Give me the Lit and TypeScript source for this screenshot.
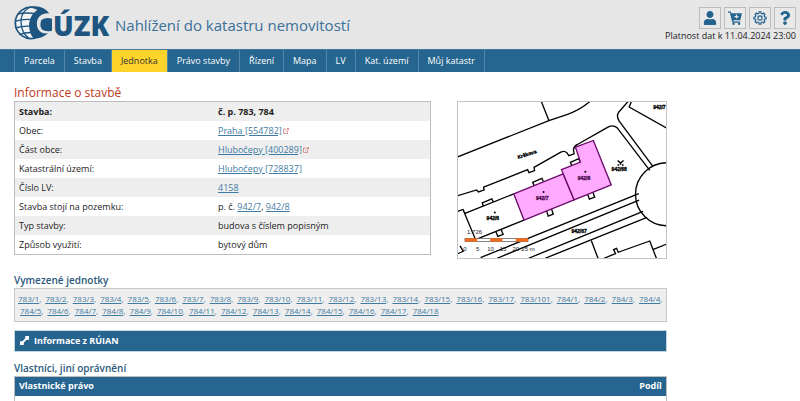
import { LitElement, html, svg, css } from "lit";
import { customElement } from "lit/decorators.js";

const NAV = ["Parcela", "Stavba", "Jednotka", "Právo stavby", "Řízení", "Mapa", "LV", "Kat. území", "Můj katastr"];
const ACTIVE = "Jednotka";

const range = (prefix: string, from: number, to: number) =>
  Array.from({ length: to - from + 1 }, (_, i) => `${prefix}/${from + i}`);
const UNITS = [...range("783", 1, 17), "783/101", ...range("784", 1, 18)];

const gear = () => {
  const points: string[] = [];
  for (let i = 0; i < 8; i++) {
    const at = (deg: number, r: number) => {
      const a = ((i * 45 + deg - 90) * Math.PI) / 180;
      return `${(12 + r * Math.cos(a)).toFixed(2)} ${(12 + r * Math.sin(a)).toFixed(2)}`;
    };
    points.push(at(-14, 8), at(-9, 10.6), at(9, 10.6), at(14, 8));
  }
  return `M${points.join("L")}Z`;
};

const userIcon = svg`<path d="M224 256c70.7 0 128-57.3 128-128S294.7 0 224 0 96 57.3 96 128s57.3 128 128 128zm89.6 32h-16.7c-22.2 10.2-46.9 16-72.9 16s-50.6-5.8-72.9-16h-16.7C60.2 288 0 348.2 0 422.4V464c0 26.5 21.5 48 48 48h352c26.5 0 48-21.5 48-48v-41.6c0-74.2-60.2-134.4-134.4-134.4z"/>`;
const questionIcon = svg`<path d="M202.021 0C122.202 0 70.503 32.703 29.914 91.026c-7.363 10.58-5.093 25.086 5.178 32.874l43.138 32.709c10.373 7.865 25.132 6.026 33.253-4.148 25.049-31.381 43.63-49.449 82.757-49.449 30.764 0 68.816 19.799 68.816 49.631 0 22.552-18.617 34.134-48.993 51.164-35.423 19.86-82.299 44.576-82.299 106.405V320c0 13.255 10.745 24 24 24h72.471c13.255 0 24-10.745 24-24v-5.773c0-42.86 125.268-44.645 125.268-160.627C377.504 66.256 286.902 0 202.021 0zM192 373.459c-38.196 0-69.271 31.075-69.271 69.271 0 38.195 31.075 69.27 69.271 69.27s69.271-31.075 69.271-69.271-31.075-69.27-69.271-69.27z"/>`;
const cartIcon = svg`<path d="M0 1h4.5l1 3H24l-3 12H9l.6 2H21v2H7.6L3.2 3.2H0z"/><circle cx="9.5" cy="22" r="2"/><circle cx="19" cy="22" r="2"/><path d="M14.5 6v7M11 9.5h7" fill="none" stroke="#e6e6e6" stroke-width="2"/>`;
const gearIcon = svg`<path d=${gear()} fill="none" stroke="currentColor" stroke-width="2" stroke-linejoin="round"/><circle cx="12" cy="12" r="3.6" fill="none" stroke="currentColor" stroke-width="2"/>`;

const TOOLS = [
  { label: "Přihlášení", box: "0 0 448 512", icon: userIcon },
  { label: "Košík", box: "0 0 24 24", icon: cartIcon },
  { label: "Nastavení", box: "0 0 24 24", icon: gearIcon },
  { label: "Nápověda", box: "0 0 384 512", icon: questionIcon },
];

@customElement("cadastre-logo")
export class CadastreLogo extends LitElement {
  static styles = css`
    :host { display: block; }
    .logo { display: block; width: 98px; height: 40px; }
    .word { font: 800 82px "Open Sans", sans-serif; fill: #1d5580; }
  `;
  render() {
    return html`<svg class="logo" viewBox="42 15 294 120" role="img" aria-label="ČÚZK">
      <path fill="#f2f4f6" d="M104 22A47 47 0 1 0 104 115Q88 92 90 68Q91 42 104 22Z"/>
      <g fill="none" stroke="#1d5580" stroke-width="4">
        <path d="M108 24A47 47 0 1 0 108 113" stroke-width="5"/>
        <path d="M92 21Q58 36 64 76Q67 100 86 114"/>
        <path d="M54 42Q76 36 110 42"/>
        <path d="M45 64Q68 56 98 59"/>
        <path d="M46 84Q70 76 98 79"/>
        <path d="M58 104Q76 96 104 98"/>
      </g>
      <path fill="#1d5580" d="M88 21Q126 12 148 40Q120 38 112 60Q106 88 126 98Q134 101 144 100Q126 118 100 115Q84 92 88 66Q93 42 112 30Q100 22 88 21Z"/>
      <path fill="#1d5580" d="M124 60Q138 50 156 56V92Q138 97 125 88Q118 74 124 60Z"/>
      <text class="word" x="159" y="107">ÚZK</text>
    </svg>`;
  }
}

@customElement("cadastre-map")
export class CadastreMap extends LitElement {
  static styles = css`
    :host { display: block; }
    .map { display: block; width: 100%; border: 1px solid #c4c4c4; box-sizing: border-box; background: #fff; }
    .line { fill: none; stroke: #000; stroke-width: 4; }
    .building { fill: #ffaaff; stroke: #6a0a6a; stroke-width: 4; }
    .plot { font: bold 15px "Liberation Sans", sans-serif; text-anchor: middle; stroke: #000; stroke-width: 1; }
    .built { fill: #4a0a4a; stroke: #4a0a4a; }
    .scale { font: 18px "Liberation Sans", sans-serif; text-anchor: middle; fill: #222; }
  `;
  render() {
    const plots: [number, number, string, boolean][] = [
      [276, 316, "942/7", true], [402, 258, "942/8", true], [127, 377, "942/6", false],
      [508, 231, "942/68", false], [387, 418, "942/67", false], [629, 43, "942/7", false],
    ];
    const ticks: [number, string][] = [[43, "0"], [81, "5"], [120, "10"], [158, "15"], [196, "20"], [233, "25 m"]];
    return html`<svg class="map" viewBox="22 22 627 469" role="img" aria-label="Mapa">
      <path class="line" d="M273 20L296 78M20 188L296 78L350 60Q390 46 420 20
        M535 20L507 52Q498 64 508 80L610 217
        M20 305L78 287L84 293L101 287L99 279L232 226L236 235L253 229L251 219L332 173Q343 168 350 175L356 184L372 178L370 165Q372 155 382 150L470 100Q488 88 502 100L600 228
        M545 20L538 37L652 101
        M652 205A95 95 0 0 0 652 395
        M20 352L37 346L43 358L190 299M37 346L75 437L221 378
        M99 337L95 326L124 314L128 322M252 275L247 264L275 252L279 261M365 214L361 204L386 193L390 202
        M136 412L142 427L158 421L152 406M289 350L294 366L309 360L304 345M413 301L418 315L434 309L429 295
        M90 491L567 298M140 493L568 318M235 493L580 352M285 493L592 370
        M424 440L444 493M462 493L497 479L491 467L500 463L505 475L600 441L620 493M611 466L652 450
        M28 456L38 472L20 480"/>
      <path class="building" d="M190 299L339 239L372 317L221 378Z"/>
      <path class="building" d="M334 226L391 203L376 158L430 138L484 272L372 317Z"/>
      <circle cx="280" cy="293" r="3"/><circle cx="406" cy="232" r="3"/><circle cx="133" cy="355" r="3"/>
      <path class="line" d="M503 198L512 206L521 198M503 212H508M516 212H521M512 206V211"/>
      ${plots.map(([x, y, t, built]) => svg`<text class="plot ${built ? "built" : ""}" x=${x} y=${y}>${t}</text>`)}
      <text class="plot" x="230" y="185" transform="rotate(-18 230 180)">Krškova</text>
      <text class="scale" x="72" y="421">1:726</text>
      <rect x="43" y="433" width="190" height="10" fill="#fff" stroke="#444" stroke-width="2"/>
      ${[43, 119, 196].map((x) => svg`<rect x=${x} y="433" width="37" height="10" fill="#f26a1b"/>`)}
      ${ticks.map(([x, t]) => svg`<text class="scale" x=${x} y="471">${t}</text>`)}
    </svg>`;
  }
}

@customElement("app-root")
export class AppRoot extends LitElement {
  static styles = css`
    :host { display: block; height: 100vh; overflow: hidden; background: #fff; color: #222; font: 9px/12px "Open Sans", "Noto Sans", sans-serif; }
    h1, h2, p { margin: 0; }
    a { color: #3f7ba3; text-underline-offset: 1px; }
    button { font: inherit; color: inherit; border: 0; padding: 0; cursor: pointer; }
    .header { display: flex; justify-content: space-between; height: 49px; box-sizing: border-box; padding: 5px 4px 0 14px; background: #e6e6e6; }
    .brand { display: flex; gap: 3px; align-items: flex-start; }
    .title { font-size: 15px; line-height: 20px; padding-top: 10px; font-weight: 400; color: #3a709a; }
    .side { display: flex; flex-direction: column; align-items: flex-end; padding-top: 2px; }
    .tools { display: flex; gap: 3px; }
    .tool { display: grid; place-items: center; width: 22px; height: 22px; box-sizing: border-box; border: 1px solid #bdbdbd; background: #e9e9e9; color: #24638f; }
    .tool svg { width: 14px; height: 14px; fill: currentColor; }
    .valid { line-height: 14px; }
    .nav { display: flex; padding-left: 14px; background: #25658f; border-top: 1px solid #3f769b; box-sizing: border-box; }
    .nav a { padding: 0 9px; line-height: 22px; color: #fff; text-decoration: none; border-right: 1px solid #5287a9; }
    .nav a:first-child { border-left: 1px solid #5287a9; }
    .nav a.active { background: #ffd42a; color: #333; }
    .main { width: calc(100% * 5 / 6); box-sizing: border-box; padding: 12px 0 0 14px; }
    .heading { font-size: 12px; line-height: 17px; font-weight: 500; color: #c03a1c; }
    .sub { font-size: 10px; line-height: 16px; font-weight: 600; color: #2b587d; }
    .overview { display: grid; grid-template-columns: minmax(0, 1fr) 210px; gap: 26px; align-items: start; margin-bottom: 13px; }
    table { width: 100%; border-collapse: collapse; }
    .info, .owners { border: 1px solid #bdbdbd; }
    .info th, .info td { height: 19px; padding: 0 4px; text-align: left; font-weight: 400; }
    .info th { width: 48%; }
    .info tr:nth-child(odd) { background: #eee; }
    .info tr:first-child > * { font-weight: 700; }
    .ext { width: 6px; height: 6px; margin-left: 1px; }
    .units { margin-bottom: 8px; padding: 4px 0 4px 3px; border: 1px solid #c8c8c8; background: #eee; color: #3f7ba3; font-size: 8px; }
    .units a + a { margin-left: 2px; }
    .toggle { display: flex; align-items: center; gap: 5px; width: 100%; height: 22px; margin-bottom: 8px; padding: 0 5px; background: #25658f; border: 1px solid #c5d5e0; color: #fff; font-weight: 700; }
    .toggle svg { width: 9px; height: 9px; }
    .owners th { height: 19px; padding: 0 4px; background: #25658f; color: #fff; text-align: left; }
    .owners td { height: 19px; padding: 0 4px; }
    .owners th:last-child { text-align: right; }
  `;

  private ext = html`<svg class="ext" viewBox="0 0 12 12" fill="none" stroke="#d08078" stroke-width="1.6" aria-hidden="true"><path d="M6 2H1v9h8V6M5 7L11 1M7.5 1H11v3.5"/></svg>`;

  private rows = [
    ["Stavba:", "č. p. 783, 784"],
    ["Obec:", html`<a href="#">Praha [554782]</a>${this.ext}`],
    ["Část obce:", html`<a href="#">Hlubočepy [400289]</a>${this.ext}`],
    ["Katastrální území:", html`<a href="#">Hlubočepy [728837]</a>`],
    ["Číslo LV:", html`<a href="#">4158</a>`],
    ["Stavba stojí na pozemku:", html`p. č. <a href="#">942/7</a>, <a href="#">942/8</a>`],
    ["Typ stavby:", "budova s číslem popisným"],
    ["Způsob využití:", "bytový dům"],
  ];

  render() {
    return html`
      <header class="header">
        <div class="brand"><cadastre-logo></cadastre-logo><p class="title">Nahlížení do katastru nemovitostí</p></div>
        <div class="side">
          <div class="tools">
            ${TOOLS.map((t) => html`<button class="tool" aria-label=${t.label}><svg viewBox=${t.box}>${t.icon}</svg></button>`)}
          </div>
          <p class="valid">Platnost dat k 11.04.2024 23:00</p>
        </div>
      </header>
      <nav class="nav">${NAV.map((n) => html`<a href="#" class=${n === ACTIVE ? "active" : ""}>${n}</a>`)}</nav>
      <main class="main">
        <h1 class="heading">Informace o stavbě</h1>
        <div class="overview">
          <table class="info"><tbody>
            ${this.rows.map(([k, v]) => html`<tr><th scope="row">${k}</th><td>${v}</td></tr>`)}
          </tbody></table>
          <cadastre-map></cadastre-map>
        </div>
        <h2 class="sub">Vymezené jednotky</h2>
        <p class="units">${UNITS.map((u, i) => html`${i ? ", " : ""}<a href="#">${u}</a>`)}</p>
        <button class="toggle"><svg viewBox="0 0 12 12" fill="#fff" aria-hidden="true"><path d="M7 0h5v5L7 5zM0 12V7h5v5z"/><path d="M3 9l6-6" stroke="#fff" stroke-width="2.4"/></svg>Informace z RÚIAN</button>
        <h2 class="sub">Vlastníci, jiní oprávnění</h2>
        <table class="owners">
          <thead><tr><th scope="col">Vlastnické právo</th><th scope="col">Podíl</th></tr></thead>
          <tbody><tr><td></td><td></td></tr></tbody>
        </table>
      </main>`;
  }
}
